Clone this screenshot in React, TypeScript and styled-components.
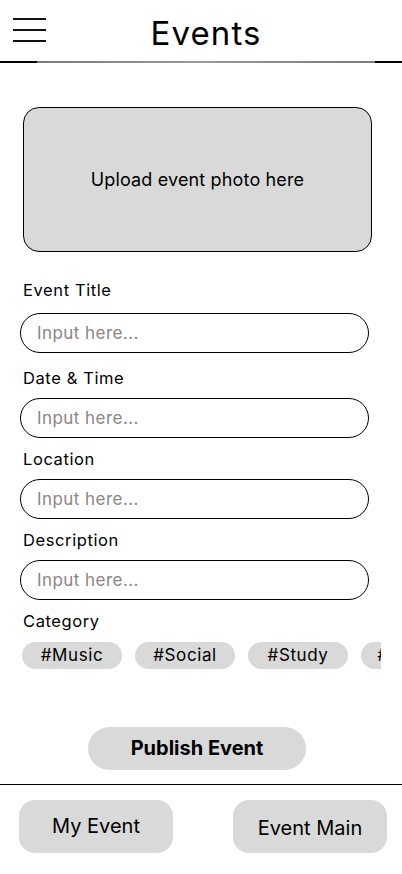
import React from 'react'
import styled, {createGlobalStyle} from 'styled-components'

const GlobalStyle = createGlobalStyle`
	* {
		box-sizing: border-box;
	}
	body {
		margin: 0;
		background: #ffffff;
		font-family: Inter, "Noto Sans", sans-serif;
		color: #000000;
	}
`

const Screen = styled.div`
	width: 402px;
	height: 874px;
	display: flex;
	flex-direction: column;
	overflow: hidden;
`

const Header = styled.header`
	position: relative;
	height: 61px;
	display: flex;
	align-items: center;
	justify-content: center;
`

const MenuButton = styled.button`
	position: absolute;
	left: 13px;
	top: 17px;
	width: 33px;
	height: 26px;
	border: none;
	background: transparent;
	display: flex;
	flex-direction: column;
	justify-content: space-between;
	padding: 1px 0;
	span {
		display: block;
		height: 2px;
		background: #111;
	}
`

const Title = styled.h1`
	margin: 0;
	padding: 4px 0 0 10px;
	font-size: 33px;
	font-weight: 400;
	letter-spacing: 1.1px;
`

const Divider = styled.div<{gray?: boolean}>`
	height: 1.5px;
	flex-shrink: 0;
	background: ${p => p.gray
		? 'linear-gradient(to right, #000 0, #000 37px, #7a7a7a 37px, #9a9a9a 200px, #7a7a7a 375px, #000 375px)'
		: '#000'};
`

const Form = styled.main`
	flex: 1;
	padding: 44px 0 0 20px;
	display: flex;
	flex-direction: column;
`

const PhotoBox = styled.div`
	margin-left: 3px;
	width: 349px;
	height: 145px;
	background: #d9d9d9;
	border: 1px solid #000;
	border-radius: 16px;
	display: flex;
	align-items: center;
	justify-content: center;
	font-size: 18px;
	letter-spacing: 0.15px;
	margin-bottom: 28px;
`

const Field = styled.div<{first?: boolean}>`
	display: flex;
	flex-direction: column;
	margin-bottom: ${p => (p.first ? 15 : 11)}px;
	label {
		margin-bottom: ${p => (p.first ? 13 : 10)}px;
	}
`

const Label = styled.label`
	margin-left: 3px;
	font-size: 16.5px;
	line-height: 20px;
	letter-spacing: 0.6px;
`

const Input = styled.input`
	width: 349px;
	height: 40px;
	border: 1px solid #000;
	border-radius: 20px;
	padding: 0 16px;
	font-family: Inter, "Noto Sans", sans-serif;
	font-size: 17px;
	letter-spacing: 0.45px;
	background: #fff;
	outline: none;
	&::placeholder {
		color: #8b8585;
	}
`

const CategoryLabel = styled(Label)`
	margin-bottom: 11px;
`

const ChipRow = styled.div`
	margin-left: 2px;
	width: 359px;
	display: flex;
	gap: 13px;
	overflow: hidden;
`

const Chip = styled.span`
	flex-shrink: 0;
	width: 100px;
	height: 27px;
	border-radius: 14px;
	background: #d9d9d9;
	display: flex;
	align-items: center;
	justify-content: center;
	font-size: 17px;
	letter-spacing: 0.6px;
`

const PublishButton = styled.button`
	align-self: center;
	margin: 58px 0 0 -28px;
	width: 218px;
	height: 43px;
	border: none;
	border-radius: 22px;
	background: #d9d9d9;
	font-family: Inter, "Noto Sans", sans-serif;
	font-size: 20px;
	font-weight: 700;
	color: #000;
`

const BottomBar = styled.nav`
	height: 89px;
	padding: 15px 15px 0 19px;
	display: flex;
	justify-content: space-between;
	align-items: flex-start;
`

const NavButton = styled.button<{drop?: number}>`
	width: 154px;
	height: 53px;
	border: none;
	border-radius: 16px;
	background: #d9d9d9;
	font-family: Inter, "Noto Sans", sans-serif;
	font-size: 20px;
	color: #000;
	padding-top: ${p => (p.drop ?? 0)}px;
`

const fields = ['Event Title', 'Date & Time', 'Location', 'Description']
const tags = ['#Music', '#Social', '#Study', '#Sports']

export default function App() {
	return (
		<>
			<GlobalStyle />
			<Screen>
				<Header>
					<MenuButton aria-label='menu'>
						<span />
						<span />
						<span />
					</MenuButton>
					<Title>Events</Title>
				</Header>
				<Divider gray />
				<Form>
					<PhotoBox>Upload event photo here</PhotoBox>
					{fields.map((name, i) => (
						<Field key={name} first={i === 0}>
							<Label>{name}</Label>
							<Input placeholder='Input here...' />
						</Field>
					))}
					<CategoryLabel>Category</CategoryLabel>
					<ChipRow>
						{tags.map(tag => <Chip key={tag}>{tag}</Chip>)}
					</ChipRow>
					<PublishButton>Publish Event</PublishButton>
				</Form>
				<Divider />
				<BottomBar>
					<NavButton>My Event</NavButton>
					<NavButton drop={4}>Event Main</NavButton>
				</BottomBar>
			</Screen>
		</>
	)
}
